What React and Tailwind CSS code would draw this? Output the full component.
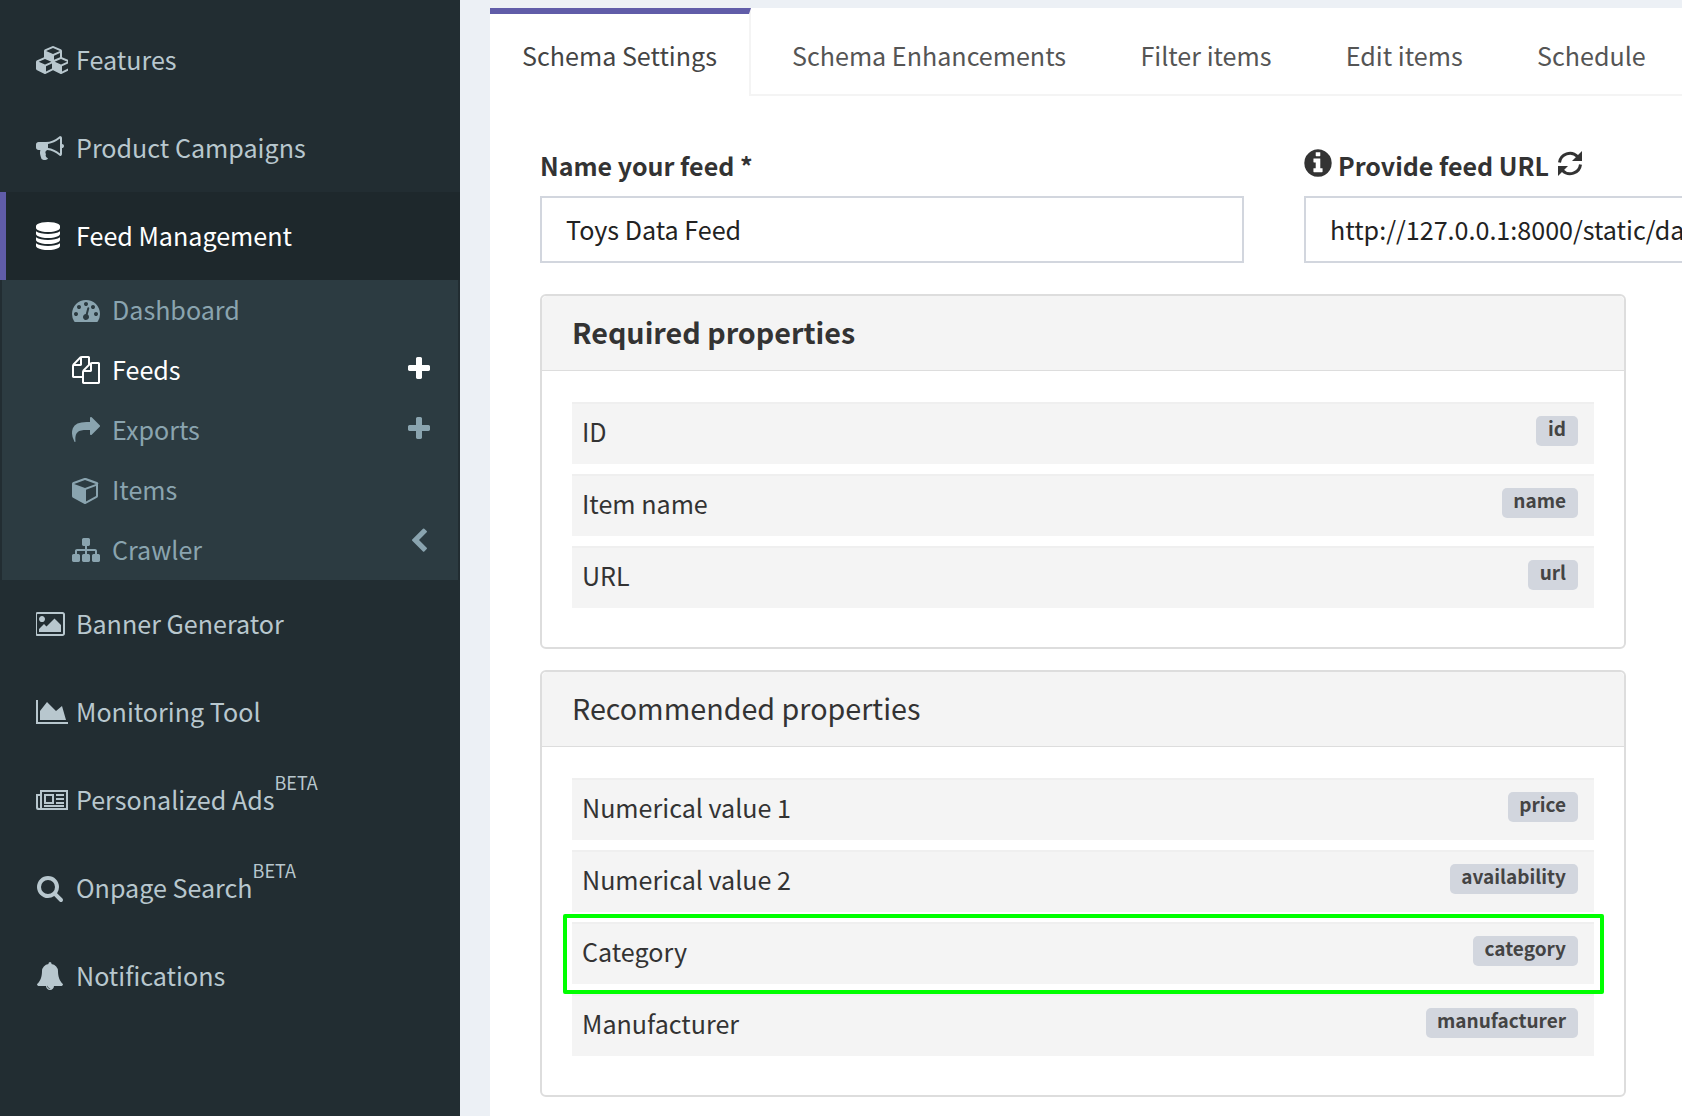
import React from "react";

const P = {
  cubes: [2048, "M640 1632l384-192v-314l-384 164v342zm-64-454l404-173-404-173-404 173zm1088 454l384-192v-314l-384 164v342zm-64-454l404-173-404-173-404 173zm-448-293l384-165v-266l-384 164v267zm-64-379l441-189-441-189-441 189zm1088 518v416q0 36-19 67t-52 47l-448 224q-25 14-57 14t-57-14l-448-224q-5-2-7-4-2 2-7 4l-448 224q-25 14-57 14t-57-14l-448-224q-33-16-52-47t-19-67v-416q0-38 21.5-70t56.5-48l434-186v-400q0-38 21.5-70t56.5-48l448-192q23-10 50-10t50 10l448 192q35 16 56.5 48t21.5 70v400l434 186q36 16 57 48t21 70z"],
  bullhorn: [1792, "M1664 640q53 0 90.5 37.5t37.5 90.5-37.5 90.5-90.5 37.5v384q0 52-38 90t-90 38q-417-347-812-380-58 19-91 66t-31 100.5 40 92.5q-20 33-23 65.5t6 58 33.5 55 48 50 61.5 50.5q-29 58-111.5 83t-168.5 11.5-132-55.5q-7-23-29.5-87.5t-32-94.5-23-89-15-101 3.5-98.5 22-110.5h-122q-66 0-113-47t-47-113v-192q0-66 47-113t113-47h480q435 0 896-384 52 0 90 38t38 90v384zm-128 604v-954q-394 302-768 343v270q377 42 768 341z"],
  database: [1536, "M768 768q237 0 443-43t325-127v170q0 69-103 128t-280 93.5-385 34.5-385-34.5-280-93.5-103-128v-170q119 84 325 127t443 43zm0 768q237 0 443-43t325-127v170q0 69-103 128t-280 93.5-385 34.5-385-34.5-280-93.5-103-128v-170q119 84 325 127t443 43zm0-384q237 0 443-43t325-127v170q0 69-103 128t-280 93.5-385 34.5-385-34.5-280-93.5-103-128v-170q119 84 325 127t443 43zm0-1152q208 0 385 34.5t280 93.5 103 128v128q0 69-103 128t-280 93.5-385 34.5-385-34.5-280-93.5-103-128v-128q0-69 103-128t280-93.5 385-34.5z"],
  dashboard: [1792, "M384 1152q0-53-37.5-90.5t-90.5-37.5-90.5 37.5-37.5 90.5 37.5 90.5 90.5 37.5 90.5-37.5 37.5-90.5zm192-448q0-53-37.5-90.5t-90.5-37.5-90.5 37.5-37.5 90.5 37.5 90.5 90.5 37.5 90.5-37.5 37.5-90.5zm428 481l101-382q6-26-7.5-48.5t-38.5-29.5-48 6.5-30 39.5l-101 382q-60 5-107 43.5t-63 98.5q-20 77 20 146t117 89 146-20 89-117q16-60-6-117t-72-91zm660-33q0-53-37.5-90.5t-90.5-37.5-90.5 37.5-37.5 90.5 37.5 90.5 90.5 37.5 90.5-37.5 37.5-90.5zm-640-640q0-53-37.5-90.5t-90.5-37.5-90.5 37.5-37.5 90.5 37.5 90.5 90.5 37.5 90.5-37.5 37.5-90.5zm448 192q0-53-37.5-90.5t-90.5-37.5-90.5 37.5-37.5 90.5 37.5 90.5 90.5 37.5 90.5-37.5 37.5-90.5zm320 448q0 261-141 483-19 29-54 29h-1402q-35 0-54-29-141-221-141-483 0-182 71-348t191-286 286-191 348-71 348 71 286 191 191 286 71 348z"],
  files: [1792, "M1696 384q40 0 68 28t28 68v1216q0 40-28 68t-68 28h-960q-40 0-68-28t-28-68v-288h-544q-40 0-68-28t-28-68v-672q0-40 20-88t48-76l408-408q28-28 76-48t88-20h416q40 0 68 28t28 68v328q68-40 128-40h416zm-544 213l-299 299h299v-299zm-640-384l-299 299h299v-299zm196 647l316-316v-416h-384v416q0 40-28 68t-68 28h-416v640h512v-256q0-40 20-88t48-76zm956 804v-1152h-384v416q0 40-28 68t-68 28h-416v640h896z"],
  share: [1792, "M1792 640q0 26-19 45l-512 512q-19 19-45 19t-45-19-19-45v-256h-224q-98 0-175.5 6t-154 21.5-133 42.5-105.5 69.5-80 101-48.5 138.5-17.5 181q0 55 5 123 0 6 2.5 23.5t2.5 26.5q0 15-8.5 25t-23.5 10q-16 0-28-17-7-9-13-22t-13.5-30-10.5-24q-127-285-127-451 0-199 53-333 162-403 875-403h224v-256q0-26 19-45t45-19 45 19l512 512q19 19 19 45z"],
  cube: [1792, "M896 1629l640-349v-636l-640 233v752zm-64-865l698-254-698-254-698 254zm832-252v768q0 35-18 65t-49 47l-704 384q-28 16-61 16t-61-16l-704-384q-31-17-49-47t-18-65v-768q0-40 23-73t61-51l704-256q26-10 55-10t55 10l704 256q38 18 61 51t23 73z"],
  sitemap: [1792, "M1792 1248v320q0 40-28 68t-68 28h-320q-40 0-68-28t-28-68v-320q0-40 28-68t68-28h96v-192h-512v192h96q40 0 68 28t28 68v320q0 40-28 68t-68 28h-320q-40 0-68-28t-28-68v-320q0-40 28-68t68-28h96v-192h-512v192h96q40 0 68 28t28 68v320q0 40-28 68t-68 28h-320q-40 0-68-28t-28-68v-320q0-40 28-68t68-28h96v-192q0-52 38-90t90-38h512v-192h-96q-40 0-68-28t-28-68v-320q0-40 28-68t68-28h320q40 0 68 28t28 68v320q0 40-28 68t-68 28h-96v192h512q52 0 90 38t38 90v192h96q40 0 68 28t28 68z"],
  picture: [1920, "M576 576q0 80-56 136t-136 56-136-56-56-136 56-136 136-56 136 56 56 136zm1024 384v448h-1408v-192l320-320 160 160 512-512zm96-704h-1600q-13 0-22.5 9.5t-9.5 22.5v1216q0 13 9.5 22.5t22.5 9.5h1600q13 0 22.5-9.5t9.5-22.5v-1216q0-13-9.5-22.5t-22.5-9.5zm160 32v1216q0 66-47 113t-113 47h-1600q-66 0-113-47t-47-113v-1216q0-66 47-113t113-47h1600q66 0 113 47t47 113z"],
  area: [2048, "M2048 1536v128h-2048v-1536h128v1408h1920zm-384-1024l256 896h-1664v-576l448-576 576 576z"],
  news: [2048, "M128 512H256V256H2048V1536H128Q0 1536 0 1408V512ZM384 384V1408H1920V384ZM128 640V1344Q128 1408 192 1408H256V640ZM512 512H1152V1152H512ZM640 640V1024H1024V640ZM1280 512H1792V640H1280ZM1280 768H1792V896H1280ZM1280 1024H1792V1152H1280ZM512 1216H1792V1344H512Z"],
  search: [1792, "M1216 832q0-185-131.5-316.5t-316.5-131.5-316.5 131.5-131.5 316.5 131.5 316.5 316.5 131.5 316.5-131.5 131.5-316.5zm512 832q0 52-38 90t-90 38q-54 0-90-38l-343-342q-179 124-399 124-143 0-273.5-55.5t-225-150-150-225-55.5-273.5 55.5-273.5 150-225 225-150 273.5-55.5 273.5 55.5 225 150 150 225 55.5 273.5q0 220-124 399l343 343q37 37 37 90z"],
  bell: [1792, "M912 1696q0-16-16-16-59 0-101.5-42.5t-42.5-101.5q0-16-16-16t-16 16q0 73 51.5 124.5t124.5 51.5q16 0 16-16zm816-288q0 52-38 90t-90 38h-448q0 106-75 181t-181 75-181-75-75-181h-448q-52 0-90-38t-38-90q50-42 91-88t85-119.5 74.5-158.5 50-206 19.5-260q0-152 117-282.5t307-158.5q-8-19-8-39 0-40 28-68t68-28 68 28 28 68q0 20-8 39 190 28 307 158.5t117 282.5q0 139 19.5 260t50 206 74.5 158.5 85 119.5 91 88z"],
  plus: [1600, "M1600 736v192q0 40-28 68t-68 28h-416v416q0 40-28 68t-68 28h-192q-40 0-68-28t-28-68v-416h-416q-40 0-68-28t-28-68v-192q0-40 28-68t68-28h416v-416q0-40 28-68t68-28h192q40 0 68 28t28 68v416h416q40 0 68 28t28 68z"],
  chevron: [1792, "M1427 301l-531 531 531 531q19 19 19 45t-19 45l-166 166q-19 19-45 19t-45-19l-742-742q-19-19-19-45t19-45l742-742q19-19 45-19t45 19l166 166q19 19 19 45t-19 45z"],
  info: [1792, "M1152 1376v-160q0-14-9-23t-23-9h-96v-512q0-14-9-23t-23-9h-320q-14 0-23 9t-9 23v160q0 14 9 23t23 9h96v320h-96q-14 0-23 9t-9 23v160q0 14 9 23t23 9h448q14 0 23-9t9-23zm-128-896v-160q0-14-9-23t-23-9h-192q-14 0-23 9t-9 23v160q0 14 9 23t23 9h192q14 0 23-9t9-23zm640 416q0 209-103 385.5t-279.5 279.5-385.5 103-385.5-103-279.5-279.5-103-385.5 103-385.5 279.5-279.5 385.5-103 385.5 103 279.5 279.5 103 385.5z"],
};

function Fa({ name, size = 28, className = "" }) {
  const [w, d] = P[name];
  return (
    <svg viewBox={`0 0 ${w} 1792`} width={(w / 1792) * size} height={size} className={`shrink-0 ${className}`} fill="currentColor" fillRule="evenodd">
      <path d={d} />
    </svg>
  );
}

function RefreshIcon({ className }) {
  return (
    <svg viewBox="0 0 26 27" width="26" height="27" className={`shrink-0 ${className}`} fill="none">
      <path d="M2.5 12.5A10.5 10.5 0 0 1 20.5 6.5" stroke="currentColor" strokeWidth="3" />
      <path d="M23.5 14.5A10.5 10.5 0 0 1 5.5 20.5" stroke="currentColor" strokeWidth="3" />
      <path d="M25 1V11H15Z" fill="currentColor" />
      <path d="M1 26V16H11Z" fill="currentColor" />
    </svg>
  );
}

function MainItem({ icon, label, beta, active }) {
  return (
    <div className={`h-[88px] flex items-center pl-[36px] ${active ? "bg-[#1e282c] text-white relative" : "text-[#b8c7ce]"}`}>
      {active && <div className="absolute left-0 top-0 bottom-0 w-[6px] bg-[#605ca8]" />}
      <div className="w-[40px] shrink-0 flex items-center">
        <Fa name={icon} />
      </div>
      <span className="text-[25.1px] leading-[36px] -mt-[2px]">{label}</span>
      {beta && <span className="text-[18px] leading-[20px] self-start mt-[16px]">BETA</span>}
    </div>
  );
}

function SubItem({ icon, label, active, right }) {
  return (
    <div className={`h-[60px] flex items-center pl-[70px] pr-[28px] ${active ? "text-white" : "text-[#8aa4af]"}`}>
      <div className="w-[40px] shrink-0 flex items-center">
        <Fa name={icon} />
      </div>
      <span className="text-[25.1px] leading-[36px] flex-1 -mt-[2px]">{label}</span>
      {right}
    </div>
  );
}

function Row({ label, tag, highlight }) {
  return (
    <div className="relative h-[62px] bg-[#f4f4f4] border-t-2 border-[#efefef] flex justify-between pl-[10px] pr-[16px]">
      <span className="text-[25.1px] leading-[36px] text-[#333] mt-[9px]">{label}</span>
      <span className="self-start mt-[12px] h-[30px] pl-[11.5px] pr-[12px] rounded-[5px] bg-[#d2d6de] text-[#444] text-[19px] leading-[24px] font-bold">{tag}</span>
      {highlight && <div className="absolute left-[-9px] right-[-10px] top-[-10px] bottom-[-10px] border-[4px] border-[#00ff00] rounded-[2px]" />}
    </div>
  );
}

function Panel({ title, bold, rows, highlight }) {
  return (
    <div className="w-[1086px] border-2 border-[#dddddd] rounded-[6px] bg-white">
      <div className={`h-[75px] bg-[#f4f4f4] border-b border-[#dddddd] rounded-t-[5px] pl-[30px] pb-[2px] flex items-center text-[#333] text-[28.7px] ${bold ? "font-bold" : ""}`}>
        {title}
      </div>
      <div className="pt-[31px] pb-[39px] px-[30px] flex flex-col gap-[10px]">
        {rows.map((r) => (
          <Row key={r[1]} label={r[0]} tag={r[1]} highlight={r[1] === highlight} />
        ))}
      </div>
    </div>
  );
}

export default function App() {
  const plus = <Fa name="plus" size={28} className="mb-[2px]" />;
  return (
    <div className="h-[1116px] w-[1682px] flex overflow-hidden bg-[#ecf0f5] font-['Noto_Sans_CJK_SC','Noto_Sans',sans-serif]">
      <aside className="w-[460px] shrink-0 bg-[#222d32] pt-[16px]">
        <MainItem icon="cubes" label="Features" />
        <MainItem icon="bullhorn" label="Product Campaigns" />
        <MainItem icon="database" label="Feed Management" active />
        <div className="mx-[2px] h-[300px] bg-[#2c3b41]">
          <SubItem icon="dashboard" label="Dashboard" />
          <SubItem icon="files" label="Feeds" active right={plus} />
          <SubItem icon="share" label="Exports" right={plus} />
          <SubItem icon="cube" label="Items" />
          <SubItem icon="sitemap" label="Crawler" right={<Fa name="chevron" size={26} className="mb-[18px] -mr-[2px]" />} />
        </div>
        <MainItem icon="picture" label="Banner Generator" />
        <MainItem icon="area" label="Monitoring Tool" />
        <MainItem icon="news" label="Personalized Ads" beta />
        <MainItem icon="search" label="Onpage Search" beta />
        <MainItem icon="bell" label="Notifications" />
      </aside>
      <main className="flex-1 min-w-0 pl-[30px] pt-[8px]">
        <div className="bg-white h-full">
          <nav className="flex h-[88px] text-[#555] text-[25.1px] leading-[36px]">
            <div className="w-[261px] flex items-center justify-center text-[#444] border-t-[6px] border-[#605ca8] border-r-2 border-r-[#f4f4f4]">
              <span>Schema Settings</span>
            </div>
            <div className="flex-1 flex items-center border-b-2 border-[#f4f4f4] pl-[41px] pt-[8px] gap-[74.3px]">
              <span>Schema Enhancements</span>
              <span>Filter items</span>
              <span>Edit items</span>
              <span>Schedule</span>
            </div>
          </nav>
          <div className="pl-[50px] pt-[52px]">
            <div className="flex gap-[60px]">
              <div className="w-[704px] shrink-0">
                <div className="h-[38px] text-[25px] leading-[35px] font-bold text-[#333]">Name your feed *</div>
                <input readOnly value="Toys Data Feed" className="mt-[10px] w-full h-[67px] border-2 border-[#d2d6de] pl-[24px] pb-[2px] text-[25.1px] text-[#222] outline-none" />
              </div>
              <div className="w-[704px] shrink-0">
                <div className="h-[38px] text-[25px] leading-[35px] font-bold text-[#333] flex items-start gap-[6px]">
                  <Fa name="info" size={32} className="-ml-[2px] -mt-[1px]" />
                  <span className="-ml-[2px]">Provide feed URL</span>
                  <RefreshIcon className="ml-[2px] mt-[2px]" />
                </div>
                <input readOnly value="http://127.0.0.1:8000/static/data/toys.xml" className="mt-[10px] w-full h-[67px] border-2 border-[#d2d6de] pl-[24px] pb-[2px] text-[25.1px] text-[#222] outline-none" />
              </div>
            </div>
            <div className="mt-[31px] flex flex-col gap-[21px]">
              <Panel title="Required properties" bold rows={[["ID", "id"], ["Item name", "name"], ["URL", "url"]]} />
              <Panel
                title="Recommended properties"
                highlight="category"
                rows={[["Numerical value 1", "price"], ["Numerical value 2", "availability"], ["Category", "category"], ["Manufacturer", "manufacturer"]]}
              />
            </div>
          </div>
        </div>
      </main>
    </div>
  );
}
